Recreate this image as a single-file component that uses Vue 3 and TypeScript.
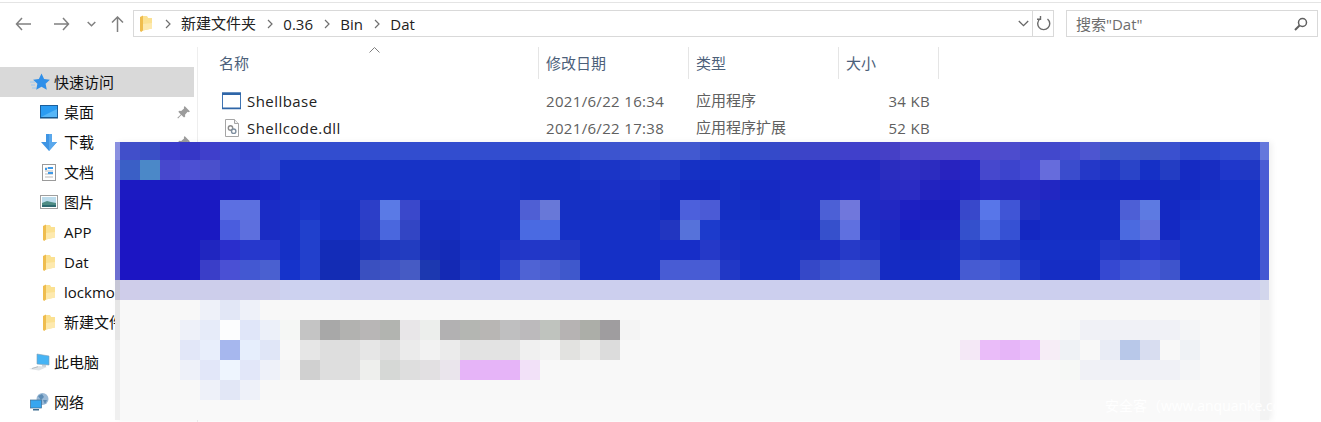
<template>
  <div class="explorer">
    <svg class="sprite" aria-hidden="true">
      <symbol id="i-folder" viewBox="0 0 12 17">
        <path d="M3 1h4l1.2 2H12v10.5L3 15.5z" fill="#fbe192" />
        <path d="M3 9l9-1v5.5l-9 2z" fill="#fde9ae" />
        <path d="M0 2l3-1.5v15L1.2 17 0 16z" fill="#efbd4e" />
      </symbol>
      <symbol id="i-star" viewBox="0 0 20 18">
        <path d="M11.500.5l2.600 5.500 5.800.7-4.300 4 1.200 6-5.300-3-5.300 3 1.200-6-4.300-4 5.800-.7z" fill="#2f8fe9" />
        <path d="M0 9h5M1 12h4M2 15h4" stroke="#9cc8f0" stroke-width="1" fill="none" />
      </symbol>
      <symbol id="i-desktop" viewBox="0 0 18 14">
        <rect x="0.5" y="0.5" width="17" height="12" fill="#2b9cf2" stroke="#1b5f9c" />
        <path d="M1 12l16-8v8z" fill="#56b6f7" />
        <path d="M0 13h18" stroke="#16507f" stroke-width="1" />
      </symbol>
      <symbol id="i-download" viewBox="0 0 16 17">
        <path d="M5 0h6v8h5l-8 9-8-9h5z" fill="#3f95e4" />
        <path d="M8 0h3v8h5l-8 9z" fill="#5aa8ec" />
      </symbol>
      <symbol id="i-docs" viewBox="0 0 14 17">
        <rect x="0.5" y="0.5" width="13" height="16" fill="#fff" stroke="#9a9a9a" />
        <path d="M3 4h8M3 7h8M3 10h8M3 13h8" stroke="#b9b9b9" stroke-width="1" />
        <path d="M6 3h5v2H6zM6 8h5v2H6z" fill="#3f9ae8" />
        <path d="M3 4h2v2H3z" fill="#3f9ae8" />
      </symbol>
      <symbol id="i-pictures" viewBox="0 0 18 14">
        <rect x="0.5" y="0.5" width="17" height="13" fill="#fff" stroke="#9f9f9f" />
        <rect x="2" y="2" width="14" height="10" fill="#bcdcec" />
        <path d="M2 8l5-2 4 1 5 1v4H2z" fill="#4f8c84" />
        <path d="M2 10l14 0v2H2z" fill="#2d6a70" />
      </symbol>
      <symbol id="i-pc" viewBox="0 0 22 18">
        <path d="M8 1l12 2v9L8 11z" fill="#46b4f5" stroke="#7f9db2" stroke-width="0.6" />
        <path d="M13 12h4v2h-4z" fill="#c6d0d8" />
        <path d="M0 16l10-3 8 1-8 3.500z" fill="#dfe3e6" />
        <path d="M3 15.500l6-1.800" stroke="#b5bcc2" stroke-width="1" />
      </symbol>
      <symbol id="i-network" viewBox="0 0 20 18">
        <circle cx="12.500" cy="6" r="6" fill="#9ab9d6" />
        <path d="M8 3l4-2 2 3-3 3zM13 7l4 0-2 4z" fill="#5d8cb5" />
        <rect x="0.5" y="7" width="11" height="8" fill="#36a6f0" stroke="#3d6c90" stroke-width="0.7" />
        <path d="M3 16h6v1.500H3z" fill="#3d6c90" />
      </symbol>
      <symbol id="i-pin" viewBox="0 0 12 12">
        <path d="M7 0l5 5-1.400.7-.8-.3L7.400 8l.2 1.800-1.100.9L4 8.200 1 11.500l-.7-.7L3.500 7.800 1.200 5.400l1-1 1.700.2 2.600-2.400-.2-.9z" fill="#9c9c9c" />
      </symbol>
      <symbol id="i-app" viewBox="0 0 21 18">
        <rect x="1.500" y="1" width="18" height="15.500" fill="#fff" stroke="#3f74b2" stroke-width="1" />
        <path d="M1 .5h19v2.500H1zM1 15.500h19v1.800H1z" fill="#2f66a8" />
      </symbol>
      <symbol id="i-dll" viewBox="0 0 14 18">
        <path d="M.5.5h9l4 4v13H.5z" fill="#fff" stroke="#a5a5a5" />
        <path d="M9.500.5v4h4" fill="#f0f0f0" stroke="#a5a5a5" />
        <circle cx="5.500" cy="9" r="2.200" fill="none" stroke="#8c8c8c" stroke-width="1.400" />
        <circle cx="8.700" cy="12.200" r="2.200" fill="#fff" stroke="#7f8f9f" stroke-width="1.400" />
      </symbol>
    </svg>

    <header class="toolbar">
      <div class="nav">
        <svg class="nav-back" width="16" height="14" viewBox="0 0 16 14">
          <path d="M7 1L1.500 7 7 13M2 7h14" />
        </svg>
        <svg class="nav-forward" width="16" height="14" viewBox="0 0 16 14">
          <path d="M9 1l5.500 6L9 13M14 7H0" />
        </svg>
        <svg class="nav-recent" width="9" height="6" viewBox="0 0 9 6">
          <path d="M.7 1l3.800 3.800L8.300 1" />
        </svg>
        <svg class="nav-up" width="13" height="16" viewBox="0 0 13 16">
          <path d="M1 6.500l5.500-5.500L12 6.500M6.500 1.500V16" />
        </svg>
      </div>

      <div class="address">
        <svg class="address-folder" width="12" height="17"><use href="#i-folder" /></svg>
        <template v-for="part in crumbs" :key="part">
          <svg class="crumb-sep" width="6" height="10" viewBox="0 0 6 10">
            <path d="M1 1l4 4-4 4" />
          </svg>
          <span class="crumb" :class="{ cjk: isCjk(part) }">{{ part }}</span>
        </template>
        <svg class="address-drop" width="11" height="7" viewBox="0 0 11 7">
          <path d="M.8 1l4.700 4.700L10.200 1" />
        </svg>
        <button class="address-refresh">
          <svg width="14" height="15" viewBox="0 0 14 15">
            <path d="M3.200 2.800A6 6 0 1 0 10.500 3M3.500 0v3.300H0" />
          </svg>
        </button>
      </div>

      <div class="search">
        <span>搜索"Dat"</span>
        <svg width="14" height="14" viewBox="0 0 14 14">
          <circle cx="8.500" cy="5.500" r="4" />
          <path d="M5.500 8.500L1 13" class="handle" />
        </svg>
      </div>
    </header>

    <div class="body">
      <aside class="sidebar">
        <div
          v-for="item in navItems"
          :key="item.label"
          class="side-row"
          :class="[item.kind, { selected: item.selected }]"
        >
          <span class="side-icon">
            <svg :width="item.w" :height="item.h"><use :href="'#i-' + item.icon" /></svg>
          </span>
          <span class="side-label" :class="{ cjk: isCjk(item.label) }">{{ item.label }}</span>
          <svg v-if="item.pinned" class="pin" width="13" height="13"><use href="#i-pin" /></svg>
        </div>
      </aside>

      <main class="files">
        <div class="sort-caret">
          <svg width="11" height="6" viewBox="0 0 11 6"><path d="M.5 5.500l5-5 5 5" /></svg>
        </div>
        <div class="file-grid head">
          <div v-for="col in columns" :key="col" class="head-cell"><span class="cjk">{{ col }}</span></div>
        </div>
        <div v-for="file in files" :key="file.name" class="file-grid row">
          <div class="cell-name">
            <span class="file-icon">
              <svg :width="file.w" :height="18"><use :href="'#i-' + file.icon" /></svg>
            </span>
            <span class="file-title">{{ file.name }}</span>
          </div>
          <div class="cell-meta latin">{{ file.date }}</div>
          <div class="cell-meta"><span class="cjk">{{ file.type }}</span></div>
          <div class="cell-meta size latin">{{ file.size }}</div>
        </div>
      </main>
    </div>

    <!-- pixelated block pasted over the screenshot -->
    <div class="mosaic">
      <template v-for="(row, r) in mosaic" :key="r">
        <i v-for="(color, c) in row" :key="c" :style="{ background: color }"></i>
      </template>
      <span class="watermark">安全客（www.anquanke.com）</span>
    </div>
  </div>
</template>

<script setup lang="ts">
const crumbs = ['新建文件夹', '0.36', 'Bin', 'Dat']
const columns = ['名称', '修改日期', '类型', '大小']

const files = [
  { name: 'Shellbase', icon: 'app', w: 21, date: '2021/6/22 16:34', type: '应用程序', size: '34 KB' },
  { name: 'Shellcode.dll', icon: 'dll', w: 14, date: '2021/6/22 17:38', type: '应用程序扩展', size: '52 KB' },
]

interface NavItem {
  label: string
  icon: string
  w: number
  h: number
  kind: string
  selected?: boolean
  pinned?: boolean
}

const navItems: NavItem[] = [
  { label: '快速访问', icon: 'star', w: 20, h: 18, kind: 'top', selected: true },
  { label: '桌面', icon: 'desktop', w: 18, h: 14, kind: 'child', pinned: true },
  { label: '下载', icon: 'download', w: 16, h: 17, kind: 'child', pinned: true },
  { label: '文档', icon: 'docs', w: 14, h: 17, kind: 'child' },
  { label: '图片', icon: 'pictures', w: 18, h: 14, kind: 'child' },
  { label: 'APP', icon: 'folder', w: 12, h: 17, kind: 'child' },
  { label: 'Dat', icon: 'folder', w: 12, h: 17, kind: 'child' },
  { label: 'lockmod', icon: 'folder', w: 12, h: 17, kind: 'child' },
  { label: '新建文件夹', icon: 'folder', w: 12, h: 17, kind: 'child' },
  { label: '此电脑', icon: 'pc', w: 22, h: 18, kind: 'top spaced' },
  { label: '网络', icon: 'network', w: 20, h: 18, kind: 'top spaced' },
]

// CJK glyphs sit a pixel low in the line box, those labels get nudged up
function isCjk(text: string): boolean {
  return /[^\x00-\x7f]/.test(text)
}

// one string per mosaic row: left strip, 57 cells, right strip. "abc*3" repeats a colour.
const COLS = 59
const rows: Array<[string, string]> = [
  ['f8f8f8', '8a90e0 414fca 3a4fc6 3a3bcb 3637c7 3f3fcb 3848cf 3341cb 344ccd 324dcf*12 324dcd 324dce 354fce 3a52d0 3c54cf 3e55d0 3f56d2 4259d0*2 3650cc 2f49cb 3149cb 344ac9 3a45c7 3c44c8*2 4040cb 4040c8 4540c6 4e47cb 5048cb 5249cb 4e47ce 5049cb 4d4ccd 4349cc 4248cc 444cd0 4d55d0 3e58c8 3c54cc 3d54c4 3a50cf 2e48cc 2d48ce 324cd0 334ccd 6578dc'],
  ['f8f8f8', '7478d8 3a5fc6 4b88c8 4748cd 4c50d3 4a50cc 3848cf 3446cd 3549cf 1733c6*12 1532c4*3 1a35c5 1b35c6 1c37c8 203ac8*2 1631c4 1330c6*3 172dc5 1c2ac5 1e28c5*2 2028c6 1f28c2 2a2dc0 2e2dc3 2c2cc0 2823bf 2226c6 4648cd 3c44cd 4448d3 666cdc 3a4ccd 2438c8 1e34c6 2a44c8 1530c6 233dc3 152bc3 182dc2 1f37cb 2038c5 4a5cd4'],
  ['f8f8f8', '6c70d2 1c1ac2 1a1bc2*4 1a20bf 1823c3 1826c6 1730c6 1733c6*11 1530c4*4 1a30c6 1a32c6 1c30c4 152bc3*2 142ac2 1530c4 152ac3 162ac3 1a2bc5 1c2ac5*2 1f2bc8 1f2ac5 272bc2 2a2cc3 2223bf 1e21c3 2124c3 2529c6 2329c2 2529c4 2227c2 1529c3*3 1528c4*2 132dc0 132bc3 1530c4 1533c8*2 4759d2'],
  ['f8f8f8', '6c6ed0 1c15c3 1a19c2*4 5c6fe2 5c70e0 1a2cc6 1730c6 1a35cb 1530c4*2 2c3ec8 5a7ae6 3a48cb 162ec3*2 1730c6*3 4f5fd4 6878d8 1530c4*5 122cc3 4c60dc 4b5bd6 142fc4*2 132ac2 1530c4 1a2cc4 4c60d6 7077dc 1c2bc4 2228c2 1d20c2 1a1fbf*2 3848cb 5876e9 4055d6 2030c2 152dc4*4 4d5fd6 5d7ae2 1429c3 1530c6 1534c8*3 4458d2'],
  ['f8f8f8', '6c6ed0 1c15c3 1a19c2*4 4a5dde 5d6fde 1a2cc4 1730c6 2040cc 1530c6*2 2a3ec4 4a67de 3245c4 152dc0*2 1731c6*3 4a6ae2*2 1530c6*5 2236c0 5672da 1c3bcc 1530c6*3 132fc6 162ac5 3650cc 5f70e0 1a2ec6 1a2ac3 1620c3 1a24c0*2 3450cc 4a68e0 3651d4 1428c2 152dc4*4 4b6ae0 6170dc 1429c3 1534c8*4 4458d2'],
  ['f8f8f8', '6c6ed0 1c15c3 1a19c2*3 2026c0 2a2ecc 2638cc*2 1530c6 2240cc 132cb8*2 1a33bc 2038c0 223cc0 172db8 142bb8 1530c4*2 2035c6 2237c8 2239c6 2238c4 1530c6*4 172ec8*2 2539c8 1b31c4 1530c6*3 1a30c2 1c2ec6 263ac8 2235c6 152bc3 152ac0*2 182cc0 223ac8 1e35c6*2 1530c6*4 2238c8 1e35c6 2539d0 2236c8 1534c8*4 4458d2'],
  ['f8f8f8', '6c6ed0 1c15c3*3 1a19c2 3a3ec8 4a50d4 4358d2 4a60d0 1533cb 2440cc 132cb4*2 3a50c0 3e52c4 465bc4 1c38b0 1429b4 1a35c0 1530c6 3048cc 4f63d4 4a5ed0 3f58cc 1530c6*4 485cd4*3 2138c6 1530c6*3 3548c8 3c54cc 4257d4 4358cc 152bc3 132cc4*3 465bd2 465cd4 3a55d4 1c36c6 152dc4*3 3548d2 3f56d4 4558d6 3e54cc 1534c8*4 4458d2'],
  ['cccfee', 'c6c6d6 cfcdea cdceeb*7 cdd2f0*3 cccfee*46 d2d6ec'],
  ['f8f8f8', 'e6e6e6 f8f8f8*4 eef1f9 e2e7f6 eef1f9 f8f8f8*50 f3f3f3'],
  ['f8f8f8', 'e6e6e6 f8f8f8*3 eef1f9 e6ebf9 fcfdfe e0e6f9 ecf0f9 f5f7f5 c4c4c4 a8a8a8 b2b2b0 b8b6b6 b2b4b0 e8e6e8 eceeec b2b1b2 b4b6b2 b8b6b4 bfbfc0 bcbabc bfc3be b6b3b3 acaea8 9f9d9f f4f4f4 f8f8f8*21 f6f7f8 f0f1f6*5 f4f5f7 f8f8f8*3 f3f3f3'],
  ['f8f8f8', 'eeeeee f8f8f8*3 e2e7f8 e8eefb a6b7ee e6eefc e0e6f7 f8f8f8 e6e6e6 dedede*2 e6e6e6 dfdfdf ebebeb f2f2f2 ebebeb e2e2e2 e3e3e3*2 f0f0f0 f3f3f3 e2e2e0 ebebea dcdcdc f8f8f8*17 f4e8f6 eabcf9 e6b5f8 e9bffa f6edf6 eff2f5 f8f8f8 e9ecf5 b8c8e9 d8ddf0 f8f8f8 eff2f5 f8f8f8*3 f3f3f3'],
  ['f8f8f8', 'eeeeee f8f8f8*3 eef1f9 e2e7f9 eef5fe e2e7f9 eef1f9 f6f6f6 d0d0d0 dedede*2 eeefed d6d8d6 dedede e2e0e2 eae5ec e6b4f8*3 f2e1f8 f8f8f8*26 f6f8f6 f0f1f6*5 f4f5f7 f8f8f8*3 f3f3f3'],
  ['f8f8f8', 'eeeeee f8f8f8*4 eef1f9 e2e7f6 eef1f9 f8f8f8*50 f3f3f3'],
  ['f9f9f9', 'f0f0f0 f9f9f9*57 f3f3f3'],
]

function expandRow(fill: string, spec: string): string[] {
  const out: string[] = []
  for (const token of spec.split(' ')) {
    const [hex, times] = token.split('*')
    for (let i = 0; i < Number(times || 1); i++) out.push('#' + hex)
  }
  while (out.length < COLS) out.push('#' + fill)
  return out.slice(0, COLS)
}

const mosaic = rows.map(([fill, spec]) => expandRow(fill, spec))
</script>

<style scoped>
.explorer {
  position: relative;
  width: 1321px;
  height: 422px;
  overflow: hidden;
  background: #fff;
  color: #1a1a1a;
  font-family: "Open Sans", "Noto Sans CJK SC", sans-serif;
  font-size: 15px;
}
.sprite {
  position: absolute;
  width: 0;
  height: 0;
}
.cjk { padding-bottom: 2px; }

/* Toolbar */
.toolbar {
  display: flex;
  height: 27px;
  margin: 2px 0 10px;
  padding-top: 7px;
  border-top: 1px solid #e4e4e4;
}
.nav {
  display: flex;
  align-items: center;
  width: 133px;
  padding: 1px 0 0 15px;
  box-sizing: border-box;
}
.nav svg {
  fill: none;
  stroke: #808080;
  stroke-width: 1.5;
  flex: none;
}
.nav-forward { margin-left: 23px; }
.nav-recent { margin-left: 17px; stroke-width: 1.3; }
.nav-up { margin-left: 15px; }
.address {
  display: flex;
  align-items: center;
  width: 921px;
  border: 1px solid #d9d9d9;
  box-sizing: border-box;
  padding-left: 6px;
}
.crumb-sep {
  flex: none;
  fill: none;
  stroke: #6f6f6f;
  stroke-width: 1.2;
  margin: 0 10px 0 11.3px;
}
.address-folder + .crumb-sep { margin-left: 13px; }
.crumb { color: #222; }
.address-drop {
  margin-left: auto;
  fill: none;
  stroke: #666;
  stroke-width: 1.3;
}
.address-refresh {
  display: flex;
  align-items: center;
  justify-content: center;
  width: 21px;
  height: 25px;
  margin-left: 3px;
  padding: 0 0 0 1px;
  background: none;
  border: none;
  border-left: 1px solid #d9d9d9;
}
.address-refresh svg {
  fill: none;
  stroke: #6b6b6b;
  stroke-width: 1.4;
}
.search {
  display: flex;
  align-items: center;
  justify-content: space-between;
  width: 252px;
  margin-left: 12px;
  padding: 0 9px;
  border: 1px solid #d9d9d9;
  box-sizing: border-box;
  color: #6d6d6d;
}
.search svg {
  fill: none;
  stroke: #5f5f5f;
  stroke-width: 1.5;
}
.search .handle { stroke-width: 2; }

/* Body */
.body {
  display: flex;
  height: 375px;
}
.sidebar {
  flex: none;
  width: 198px;
  padding-top: 20px;
  box-sizing: border-box;
  border-right: 1px solid #eeeeee;
}
.side-row {
  display: flex;
  align-items: center;
  width: 194px;
  height: 30px;
  white-space: nowrap;
  color: #111;
}
.side-row.selected { background: #d9d9d9; }
.side-row.spaced { margin-top: 10px; }
.side-row .side-icon {
  display: flex;
  align-items: center;
  justify-content: center;
  flex: none;
}
.side-row.top .side-icon {
  width: 22px;
  margin: 0 3px 0 29px;
}
.side-row.child .side-icon {
  width: 18px;
  margin: 0 6px 0 40px;
}
.pin { margin-left: auto; margin-right: 4px; }

/* File list */
.files {
  position: relative;
  flex: 1;
  padding-left: 14px;
}
.sort-caret {
  position: absolute;
  left: 171px;
  top: 0;
}
.sort-caret svg {
  display: block;
  fill: none;
  stroke: #7f7f7f;
}
.file-grid {
  display: grid;
  grid-template-columns: 327px 150px 150px 100px;
}
.head { height: 32px; }
.head-cell {
  display: flex;
  align-items: center;
  padding-left: 7px;
  border-right: 1px solid #e5e5e5;
  color: #4c607a;
}
.row {
  height: 27px;
  align-items: center;
  color: #222;
}
.head + .row { margin-top: 8px; }
.cell-name {
  display: flex;
  align-items: center;
  padding-left: 9px;
}
.file-icon {
  display: flex;
  justify-content: center;
  width: 21px;
  margin-right: 5px;
}
.file-title { letter-spacing: 0.45px; }
.cell-meta {
  display: flex;
  align-items: center;
  padding-left: 7px;
  color: #606060;
}
.cell-meta.latin { letter-spacing: 0.33px; }
.cell-meta.size {
  justify-content: flex-end;
  padding: 0 9px 0 0;
}

/* Mosaic overlay */
.mosaic {
  position: absolute;
  left: 115px;
  top: 142px;
  display: grid;
  grid-template-columns: 5px repeat(57, 20px) 9px;
  grid-template-rows: 18px repeat(13, 20px);
  box-shadow: 3px 0 6px rgba(0, 0, 0, 0.06);
}
.mosaic i { display: block; }
.watermark {
  position: absolute;
  left: 990px;
  top: 254px;
  font-size: 14px;
  line-height: 20px;
  white-space: nowrap;
  color: #fff;
}
</style>
